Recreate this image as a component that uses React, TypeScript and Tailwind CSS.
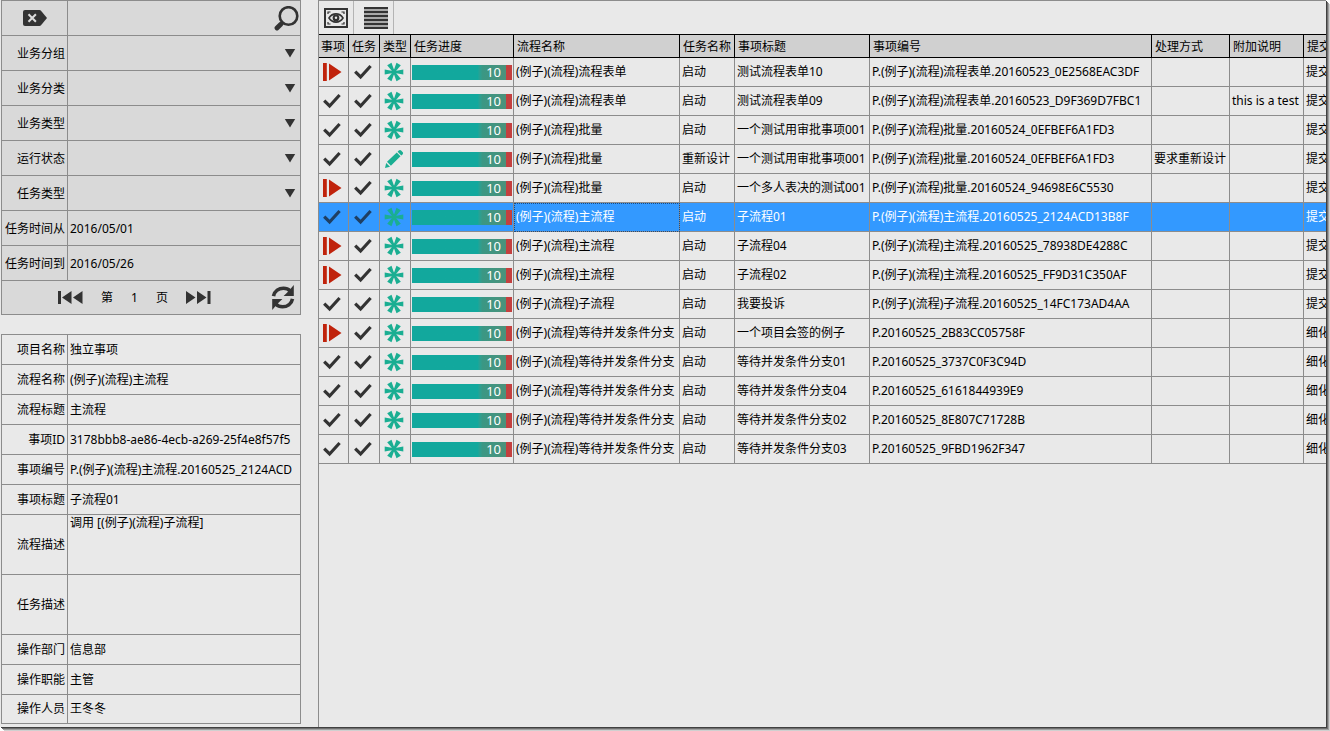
import { useState } from "react";
import type { ReactNode } from "react";

type ItemState = "running" | "done";
type TaskKind = "start" | "redesign";

interface TaskRow {
  item: ItemState;
  kind: TaskKind;
  progress: number;
  flow: string;
  task: string;
  title: string;
  code: string;
  handling?: string;
  note?: string;
  submit: string;
}

const FILTERS = ["业务分组", "业务分类", "业务类型", "运行状态", "任务类型"];

const COLUMNS = [
  { label: "事项", width: "w-[30px]" },
  { label: "任务", width: "w-[31px]" },
  { label: "类型", width: "w-[31px]" },
  { label: "任务进度", width: "w-[103px]" },
  { label: "流程名称", width: "w-[166px]" },
  { label: "任务名称", width: "w-[55px]" },
  { label: "事项标题", width: "w-[135px]" },
  { label: "事项编号", width: "w-[282px]" },
  { label: "处理方式", width: "w-[78px]" },
  { label: "附加说明", width: "w-[74px]" },
  { label: "提交", width: "w-[80px]" },
];

const ROWS: TaskRow[] = [
  { item: "running", kind: "start", progress: 10, flow: "(例子)(流程)流程表单", task: "启动", title: "测试流程表单10", code: "P.(例子)(流程)流程表单.20160523_0E2568EAC3DF", submit: "提交" },
  { item: "done", kind: "start", progress: 10, flow: "(例子)(流程)流程表单", task: "启动", title: "测试流程表单09", code: "P.(例子)(流程)流程表单.20160523_D9F369D7FBC1", note: "this is a test", submit: "提交" },
  { item: "done", kind: "start", progress: 10, flow: "(例子)(流程)批量", task: "启动", title: "一个测试用审批事项001", code: "P.(例子)(流程)批量.20160524_0EFBEF6A1FD3", submit: "提交" },
  { item: "done", kind: "redesign", progress: 10, flow: "(例子)(流程)批量", task: "重新设计", title: "一个测试用审批事项001", code: "P.(例子)(流程)批量.20160524_0EFBEF6A1FD3", handling: "要求重新设计", submit: "提交" },
  { item: "running", kind: "start", progress: 10, flow: "(例子)(流程)批量", task: "启动", title: "一个多人表决的测试001", code: "P.(例子)(流程)批量.20160524_94698E6C5530", submit: "提交" },
  { item: "done", kind: "start", progress: 10, flow: "(例子)(流程)主流程", task: "启动", title: "子流程01", code: "P.(例子)(流程)主流程.20160525_2124ACD13B8F", submit: "提交" },
  { item: "running", kind: "start", progress: 10, flow: "(例子)(流程)主流程", task: "启动", title: "子流程04", code: "P.(例子)(流程)主流程.20160525_78938DE4288C", submit: "提交" },
  { item: "running", kind: "start", progress: 10, flow: "(例子)(流程)主流程", task: "启动", title: "子流程02", code: "P.(例子)(流程)主流程.20160525_FF9D31C350AF", submit: "提交" },
  { item: "done", kind: "start", progress: 10, flow: "(例子)(流程)子流程", task: "启动", title: "我要投诉", code: "P.(例子)(流程)子流程.20160525_14FC173AD4AA", submit: "提交" },
  { item: "running", kind: "start", progress: 10, flow: "(例子)(流程)等待并发条件分支", task: "启动", title: "一个项目会签的例子", code: "P.20160525_2B83CC05758F", submit: "细化" },
  { item: "done", kind: "start", progress: 10, flow: "(例子)(流程)等待并发条件分支", task: "启动", title: "等待并发条件分支01", code: "P.20160525_3737C0F3C94D", submit: "细化" },
  { item: "done", kind: "start", progress: 10, flow: "(例子)(流程)等待并发条件分支", task: "启动", title: "等待并发条件分支04", code: "P.20160525_6161844939E9", submit: "细化" },
  { item: "done", kind: "start", progress: 10, flow: "(例子)(流程)等待并发条件分支", task: "启动", title: "等待并发条件分支02", code: "P.20160525_8E807C71728B", submit: "细化" },
  { item: "done", kind: "start", progress: 10, flow: "(例子)(流程)等待并发条件分支", task: "启动", title: "等待并发条件分支03", code: "P.20160525_9FBD1962F347", submit: "细化" },
];

const DETAILS: { label: string; value: string; tall?: boolean }[] = [
  { label: "项目名称", value: "独立事项" },
  { label: "流程名称", value: "(例子)(流程)主流程" },
  { label: "流程标题", value: "主流程" },
  { label: "事项ID", value: "3178bbb8-ae86-4ecb-a269-25f4e8f57f5" },
  { label: "事项编号", value: "P.(例子)(流程)主流程.20160525_2124ACD" },
  { label: "事项标题", value: "子流程01" },
  { label: "流程描述", value: "调用 [(例子)(流程)子流程]", tall: true },
  { label: "任务描述", value: "", tall: true },
  { label: "操作部门", value: "信息部" },
  { label: "操作职能", value: "主管" },
  { label: "操作人员", value: "王冬冬" },
];

function ClearIcon() {
  return (
    <svg width="24" height="16" viewBox="0 0 24 16">
      <path d="M2 0h14.5a2 2 0 0 1 1.5.7L24 8l-6 7.3a2 2 0 0 1-1.5.7H2a2 2 0 0 1-2-2V2a2 2 0 0 1 2-2z" fill="#333" />
      <path d="M5.5 4.2l7.4 7.6M12.9 4.2l-7.4 7.6" stroke="#dcdcdc" strokeWidth="2" />
    </svg>
  );
}

function SearchIcon() {
  return (
    <svg width="25" height="25" viewBox="0 0 25 25" fill="none" stroke="#333">
      <circle cx="14.5" cy="10" r="8.8" strokeWidth="2.6" />
      <path d="M8.5 16.5L6.5 18.5" strokeWidth="2.6" />
      <path d="M6.8 18.2L3 22" strokeWidth="4.8" strokeLinecap="round" />
    </svg>
  );
}

function SkipIcon({ forward = false }: { forward?: boolean }) {
  return (
    <svg width="25" height="13" viewBox="0 0 25 13" fill="#333">
      {forward ? (
        <path d="M0 0l9.500 6.500L0 13zM11 0l9.500 6.500L11 13zM21.500 0h3v13h-3z" />
      ) : (
        <path d="M24.500 0L15 6.500l9.500 6.500zM13.500 0L4 6.500l9.500 6.500zM0 0h3v13H0z" />
      )}
    </svg>
  );
}

function RefreshIcon() {
  return (
    <svg width="24" height="25" viewBox="0 0 24 25" fill="none" stroke="#333" strokeWidth="3.600">
      <path d="M2.500 11.200C3.500 6 8 3.200 12.500 3.200c3 0 5 1 6.800 2.800" />
      <path d="M21.500 13.800c-1 5.200-5.500 8-10 8-3 0-5-1-6.800-2.800" />
      <path d="M22.800 0v11H12.600l3.400-3.300 3.400-3.800zM1.200 25V14h10.200L8 17.300l-3.400 3.800z" fill="#333" stroke="none" />
    </svg>
  );
}

function EyeFrameIcon() {
  return (
    <svg width="24" height="20" viewBox="0 0 24 20" fill="none" stroke="#333">
      <rect x="1" y="1" width="22" height="18" strokeWidth="2" />
      <path d="M4 6V4h2.500M17.500 4H20v2M4 14v2h2.500M17.500 16H20v-2" strokeWidth="1.200" />
      <path d="M5 10c1.800-2.800 4.300-4.100 7-4.100s5.200 1.300 7 4.100c-1.800 2.800-4.300 4.100-7 4.100S6.800 12.800 5 10z" strokeWidth="1.600" />
      <circle cx="12" cy="10" r="3.400" fill="#333" stroke="none" />
      <circle cx="12" cy="9.800" r="1.200" fill="#e8e8e8" stroke="none" />
    </svg>
  );
}

function ListIcon() {
  return (
    <svg width="24" height="22" viewBox="0 0 24 22" fill="#333">
      <path d="M0 0h24v22H0z" fill="#a8a8a8" />
      <path d="M0 0h24v2H0zM0 4h24v2H0zM0 8h24v2H0zM0 12h24v2H0zM0 16h24v2H0zM0 20h24v2H0z" />
    </svg>
  );
}

function CheckIcon({ selected }: { selected: boolean }) {
  return (
    <svg width="18" height="16" viewBox="0 0 18 16" fill="none" stroke={selected ? "#1f3f63" : "#333"} strokeWidth="3.200">
      <path d="M1.200 7.600l5.400 5.400L16.600 2" />
    </svg>
  );
}

function RunningIcon() {
  return (
    <svg width="19" height="18" viewBox="0 0 19 18" fill="#c0230c">
      <path d="M0 0h3.800v18H0zM6 .5L18.500 9 6 17.500z" />
    </svg>
  );
}

function StarIcon() {
  return (
    <svg width="20" height="20" viewBox="-10 -10 20 20" fill="#1aae92">
      {[0, 60, 120, 180, 240, 300].map((angle) => (
        <path key={angle} d="M1 -1L9.300 -2.500V2.500L1 1z" transform={`rotate(${angle})`} />
      ))}
      <circle r="2.600" />
    </svg>
  );
}

function PencilIcon() {
  return (
    <svg width="20" height="20" viewBox="0 0 20 20" fill="#1aae92">
      <path d="M1 19l1.200-5 3.800 3.800zM3 12.800L12.800 3.600l3.700 3.700L6.900 16.800zM13.600 2.800l1.200-1.200c.8-.8 1.600-.8 2.300 0l1.400 1.400c.8.800.8 1.600 0 2.400l-1.200 1.200z" />
    </svg>
  );
}

function ProgressBar({ value }: { value: number }) {
  return (
    <div
      role="progressbar"
      aria-valuenow={value}
      aria-label="任务进度"
      className="mx-px flex h-[15px] bg-[#c3403f]"
    >
      <div className="mr-1.5 flex flex-1 items-center justify-end bg-linear-to-r from-[#12a89d] from-70% via-[#3a9784] via-75% to-[#4b927b] pr-[5px] text-[13px] leading-[15px] text-white">
        {value}
      </div>
    </div>
  );
}

function FieldRow({ label, htmlFor, children }: { label: string; htmlFor: string; children: ReactNode }) {
  return (
    <div className="flex h-[35px] border-b border-[#8c8c8c]">
      <label htmlFor={htmlFor} className="flex w-[66px] shrink-0 items-center justify-end border-r border-[#8c8c8c] pt-0.5 pr-0.5">
        {label}
      </label>
      <div className="relative min-w-0 flex-1">{children}</div>
    </div>
  );
}

function SearchPanel() {
  return (
    <form className="border border-[#8c8c8c] bg-[#d9d9d9]" onSubmit={(e) => e.preventDefault()}>
      <div className="flex h-[35px] border-b border-[#8c8c8c]">
        <button type="reset" aria-label="清除" className="flex w-[66px] shrink-0 items-center justify-center border-r border-[#8c8c8c]">
          <ClearIcon />
        </button>
        <input aria-label="关键字" className="min-w-0 flex-1 bg-transparent px-0.5 outline-none" />
        <button type="submit" aria-label="查询" className="flex w-7 shrink-0 items-center justify-center">
          <SearchIcon />
        </button>
      </div>

      {FILTERS.map((label) => (
        <FieldRow key={label} label={label} htmlFor={label}>
          <select id={label} className="h-full w-full appearance-none bg-transparent px-0.5 outline-none">
            <option value="" />
          </select>
          <svg className="pointer-events-none absolute top-3 right-1" width="12" height="10" viewBox="0 0 12 10">
            <path d="M.8 1h10.400L6 9.500z" fill="#333" />
          </svg>
        </FieldRow>
      ))}

      <FieldRow label="任务时间从" htmlFor="date-from">
        <input id="date-from" defaultValue="2016/05/01" className="h-full w-full bg-transparent px-0.5 outline-none" />
      </FieldRow>
      <FieldRow label="任务时间到" htmlFor="date-to">
        <input id="date-to" defaultValue="2016/05/26" className="h-full w-full bg-transparent px-0.5 outline-none" />
      </FieldRow>

      <div className="flex h-[33px] items-center gap-[18px] pr-[5px] pl-14">
        <button type="button" aria-label="上一页">
          <SkipIcon />
        </button>
        <span>第</span>
        <span>1</span>
        <span>页</span>
        <button type="button" aria-label="下一页">
          <SkipIcon forward />
        </button>
        <button type="button" aria-label="刷新" className="ml-auto">
          <RefreshIcon />
        </button>
      </div>
    </form>
  );
}

function DetailPanel() {
  return (
    <dl className="border border-[#8c8c8c]">
      {DETAILS.map(({ label, value, tall }) => (
        <div
          key={label}
          className={`flex border-b border-[#8c8c8c] last:h-7 last:border-b-0 ${tall ? "h-[60px]" : "h-[30px]"}`}
        >
          <dt className="flex w-[66px] shrink-0 items-center justify-end border-r border-[#8c8c8c] pr-0.5">{label}</dt>
          <dd className={`flex min-w-0 flex-1 overflow-hidden pl-0.5 whitespace-nowrap ${tall ? "items-start" : "items-center"}`}>
            {value}
          </dd>
        </div>
      ))}
    </dl>
  );
}

function TaskTable() {
  const [selected, setSelected] = useState(5);

  return (
    <table className="w-max table-fixed border-separate border-spacing-0 whitespace-nowrap">
      <thead>
        <tr className="h-6">
          {COLUMNS.map(({ label, width }) => (
            <th
              key={label}
              className={`${width} overflow-hidden border-y border-r border-black bg-[#d0d0d0] p-0 pt-0.5 pl-[3px] text-left font-normal first:pl-0.5`}
            >
              {label}
            </th>
          ))}
        </tr>
      </thead>
      <tbody>
        {ROWS.map((row, index) => {
          const active = index === selected;
          const cell = "overflow-hidden border-r border-b border-[#8c8c8c] p-0";

          return (
            <tr
              key={index}
              aria-selected={active}
              onClick={() => setSelected(index)}
              className={`h-[29px] ${active ? "bg-[#3399ff] text-white" : ""}`}
            >
              <td className={`${cell} pl-1`}>{row.item === "running" ? <RunningIcon /> : <CheckIcon selected={active} />}</td>
              <td className={`${cell} pl-[5px]`}>
                <CheckIcon selected={active} />
              </td>
              <td className={`${cell} pl-1`}>{row.kind === "redesign" ? <PencilIcon /> : <StarIcon />}</td>
              <td className={cell}>
                <ProgressBar value={row.progress} />
              </td>
              <td className={`${cell} pl-0.5 ${active ? "outline outline-dotted -outline-offset-1 outline-[#1d4b80]" : ""}`}>
                {row.flow}
              </td>
              <td className={`${cell} pl-0.5`}>{row.task}</td>
              <td className={`${cell} pl-0.5`}>{row.title}</td>
              <td className={`${cell} pl-0.5`}>{row.code}</td>
              <td className={`${cell} pl-0.5`}>{row.handling}</td>
              <td className={`${cell} pl-0.5`}>{row.note}</td>
              <td className={`${cell} pl-0.5`}>{row.submit}</td>
            </tr>
          );
        })}
      </tbody>
    </table>
  );
}

export default function App() {
  return (
    <div className="flex min-h-screen bg-white pr-1 pb-1 font-['Noto_Sans','Noto_Sans_CJK_SC',sans-serif] text-xs text-black">
      <div className="flex min-w-0 flex-1 bg-[#e9e9e9] shadow-[1px_1px_0_#404040,2px_2px_0_#707070,3px_3px_0_#a0a0a0,4px_4px_0_#d0d0d0]">
        <aside className="ml-px flex w-[300px] shrink-0 flex-col gap-[19px]">
          <SearchPanel />
          <DetailPanel />
        </aside>

        <main className="ml-[17px] min-w-0 flex-1 overflow-hidden border-t border-l border-[#8c8c8c]">
          <div className="flex h-[33px]">
            <button type="button" aria-label="查看" className="flex w-[35px] items-center justify-center border-r border-[#b4b4b4]">
              <EyeFrameIcon />
            </button>
            <button type="button" aria-label="列表" className="flex w-10 items-center justify-center border-r border-[#b4b4b4] pl-1">
              <ListIcon />
            </button>
          </div>
          <TaskTable />
        </main>
      </div>
    </div>
  );
}
